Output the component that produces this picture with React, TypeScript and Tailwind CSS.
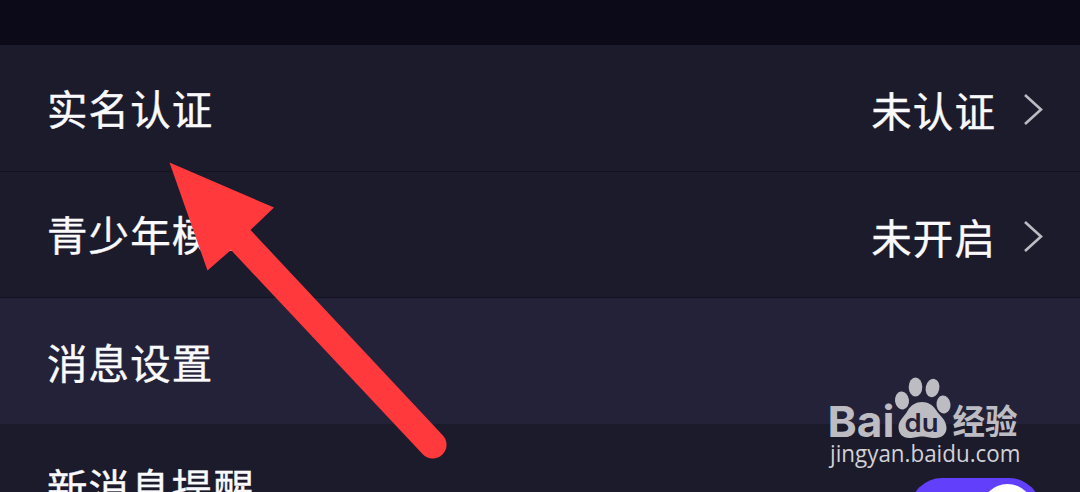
import React from 'react';

interface SettingRowProps {
  label: string;
  value?: string;
}

function Chevron() {
  return (
    <svg className="w-5 h-8 ml-7" viewBox="0 0 20 32" fill="none" stroke="#bcbbc4" strokeWidth="2.6">
      <path d="M1 1 17 15.5 1 30" />
    </svg>
  );
}

function SettingRow({ label, value }: SettingRowProps) {
  return (
    <div className="flex h-[126.5px] items-center justify-between border-b border-[#131220] bg-[#1c1b2b] pl-[47px] pr-9">
      <span>{label}</span>
      {value && (
        <div className="flex items-center pt-[5px]">
          <span>{value}</span>
          <Chevron />
        </div>
      )}
    </div>
  );
}

function Toggle() {
  return (
    <div className="flex h-16 w-[131px] shrink-0 items-center justify-end rounded-full bg-[#623ffb] px-[7px]">
      <div className="h-[53px] w-[53px] rounded-full bg-white" />
    </div>
  );
}

function Arrow() {
  return (
    <svg className="absolute left-[160px] top-[155px]" width="300" height="310" viewBox="160 155 300 310" fill="#ff393c">
      <path d="M169.5 162.5 274 207.5 250.5 230 442.5 435A13.7 13.7 0 0 1 423 454.5L231 250 207.5 270.5Z" />
    </svg>
  );
}

function Watermark() {
  return (
    <svg className="absolute left-[820px] top-[365px] tracking-normal" width="220" height="110" viewBox="820 365 220 110" fill="#bdbcc3">
      <text x="827.5" y="436.5" textLength="67" lengthAdjust="spacingAndGlyphs" className="font-['Inter',sans-serif] text-[43px] font-bold [-webkit-text-stroke:0]">Bai</text>
      <ellipse cx="902" cy="400.5" rx="7" ry="9" transform="rotate(-8 902 400.5)" />
      <ellipse cx="915.5" cy="387" rx="6.8" ry="9.5" />
      <ellipse cx="932.5" cy="388" rx="6.8" ry="9.3" transform="rotate(12 932.5 388)" />
      <ellipse cx="943.5" cy="404.5" rx="7" ry="9" transform="rotate(-8 943.5 404.5)" />
      <path d="M922 402C928 402 933 405 936 410C940 416 946.5 420 946.5 428C946.5 434 942 438 935 438C929 438 927 436.5 922 436.5C917 436.5 915 438 909 438C903 438 898.5 434 898.5 427C898.5 420 905 416 908 410C911 405 916 402 922 402Z" />
      <text x="904.5" y="432" textLength="34" lengthAdjust="spacingAndGlyphs" fill="#242238" className="font-['Inter',sans-serif] text-[25px] font-semibold [-webkit-text-stroke:0]">du</text>
      <text x="952.5" y="433.5" textLength="65" lengthAdjust="spacingAndGlyphs" className="font-['Noto_Sans_CJK_SC',sans-serif] text-[34px] font-bold [-webkit-text-stroke:0]">经验</text>
      <text x="830" y="462" textLength="190.5" lengthAdjust="spacingAndGlyphs" fill="#d2d1d6" className="font-['Open_Sans',sans-serif] text-[23px] [-webkit-text-stroke:0.4px_#d2d1d6]">jingyan.baidu.com</text>
    </svg>
  );
}

export default function App() {
  return (
    <div className="relative h-[492px] w-[1080px] overflow-hidden bg-[#1c1b2b] font-['Noto_Sans_CJK_SC',sans-serif] text-[40.5px] leading-[60px] tracking-[1.1px] text-[#fafafd] [-webkit-text-stroke:0.4px_#fafafd]">
      <div className="h-[45px] bg-[#0c0a18]" />
      <SettingRow label="实名认证" value="未认证" />
      <SettingRow label="青少年模式" value="未开启" />
      <div className="flex h-[126px] items-center bg-[#242238] pl-[47px] pt-px">消息设置</div>
      <div className="flex h-[127px] items-start justify-between pl-[47px] pr-[39px]">
        <span className="pt-[33px]">新消息提醒</span>
        <div className="pt-[54px]">
          <Toggle />
        </div>
      </div>
      <Arrow />
      <Watermark />
    </div>
  );
}
